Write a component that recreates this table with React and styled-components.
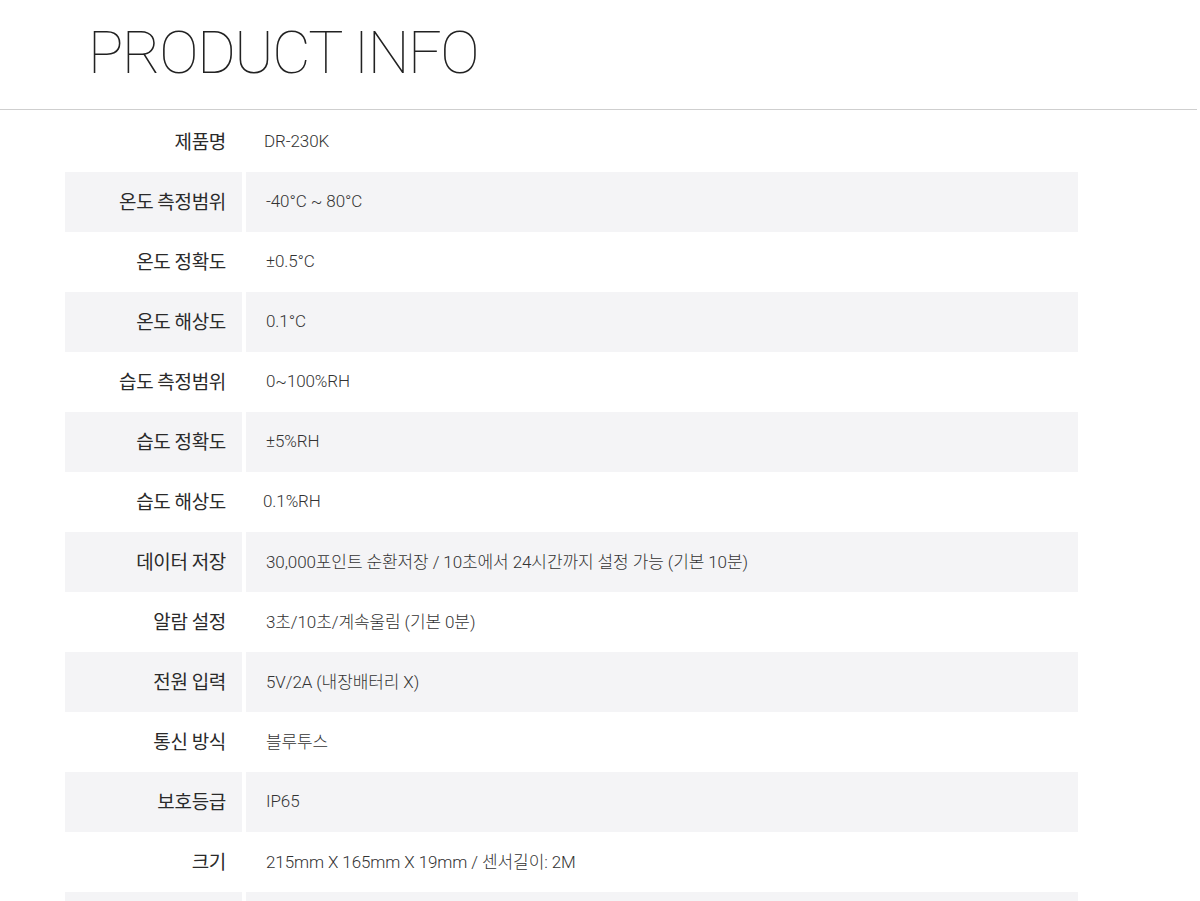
import React from "react";
import styled, { createGlobalStyle } from "styled-components";

const GlobalStyle = createGlobalStyle`
  html, body {
    margin: 0;
    padding: 0;
    background: #ffffff;
  }
  body {
    font-family: Roboto, "Noto Sans CJK KR", sans-serif;
    color: #333;
  }
`;

const Page = styled.div`
  width: 1200px;
  height: 901px;
  overflow: hidden;
`;

const Header = styled.header`
  height: 110px;
  width: 1197px;
  border-bottom: 1px solid #cfcfcf;
  box-sizing: border-box;
  padding-left: 88px;
  display: flex;
  align-items: flex-start;
`;

const Title = styled.h1`
  margin: 0;
  padding-top: 18px;
  font-family: Roboto, "Noto Sans", sans-serif;
  font-weight: 100;
  font-size: 59px;
  line-height: 70px;
  letter-spacing: -1.4px;
  color: #222;
`;

const Table = styled.div`
  margin: 2px 0 0 65px;
  display: flex;
  flex-direction: column;
`;

const Row = styled.div`
  display: grid;
  grid-template-columns: 177px 832px;
  column-gap: 4px;
  height: 60px;
`;

const Label = styled.div`
  background: ${(p) => (p.$shaded ? "#f4f4f6" : "transparent")};
  display: flex;
  align-items: center;
  justify-content: flex-end;
  padding-right: 16px;
  padding-bottom: 3px;
  font-family: "Noto Sans CJK KR", sans-serif;
  font-size: 19px;
  font-weight: 400;
  letter-spacing: -0.3px;
  color: #2a2a2a;
`;

const Value = styled.div`
  background: ${(p) => (p.$shaded ? "#f4f4f6" : "transparent")};
  display: flex;
  align-items: center;
  padding-left: ${(p) => p.$indent}px;
  padding-bottom: 3px;
  font-family: Roboto, "Noto Sans CJK KR", sans-serif;
  font-size: 17px;
  font-weight: 300;
  color: #333;
  letter-spacing: -0.1px;
`;

const specs = [
  ["제품명", "DR-230K", 18],
  ["온도 측정범위", "-40°C ~ 80°C", 20],
  ["온도 정확도", "±0.5°C", 20],
  ["온도 해상도", "0.1°C", 20],
  ["습도 측정범위", "0~100%RH", 20],
  ["습도 정확도", "±5%RH", 20],
  ["습도 해상도", "0.1%RH", 17],
  ["데이터 저장", "30,000포인트 순환저장 / 10초에서 24시간까지 설정 가능 (기본 10분)", 20],
  ["알람 설정", "3초/10초/계속울림 (기본 0분)", 20],
  ["전원 입력", "5V/2A (내장배터리 X)", 20],
  ["통신 방식", "블루투스", 20],
  ["보호등급", "IP65", 20],
  ["크기", "215mm X 165mm X 19mm / 센서길이: 2M", 20],
  ["", "", 20],
];

export default function App() {
  return (
    <Page>
      <GlobalStyle />
      <Header>
        <Title>PRODUCT INFO</Title>
      </Header>
      <Table>
        {specs.map(([label, value, indent], i) => (
          <Row key={i}>
            <Label $shaded={i % 2 === 1}>{label}</Label>
            <Value $shaded={i % 2 === 1} $indent={indent}>
              {value}
            </Value>
          </Row>
        ))}
      </Table>
    </Page>
  );
}
